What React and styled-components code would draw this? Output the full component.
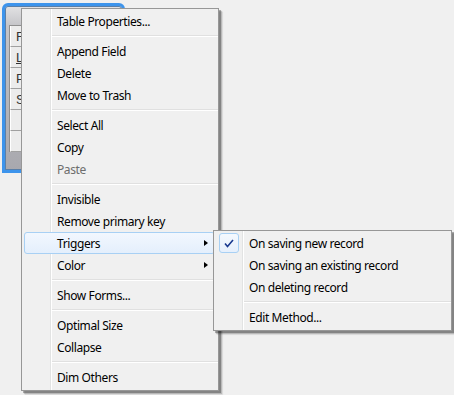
import React from 'react';
import styled, { createGlobalStyle } from 'styled-components';

const GlobalStyle = createGlobalStyle`
    html, body {
        margin: 0;
        padding: 0;
        background: #f0f0f0;
    }
    body {
        font-family: 'Noto Sans', 'Segoe UI', sans-serif;
        font-size: 12px;
        color: #000;
    }
`;

const Desktop = styled.div`
    position: relative;
    width: 454px;
    height: 395px;
    overflow: hidden;
    background: #f0f0f0;
`;

const Window = styled.div`
    position: absolute;
    left: 2px;
    top: 3px;
    width: 123px;
    height: 170px;
    box-sizing: border-box;
    border: 3px solid #3d94ec;
    border-radius: 6px 6px 0 0;
    background: linear-gradient(#e2e2e4 0px, #c4c4c8 20px, #a8a8ae 100%);
    padding: 19px 0 0 4px;
    box-shadow: inset 0 0 0 1px #5a7fa8;
`;

const Table = styled.div`
    display: grid;
    grid-template-rows: repeat(6, 21px);
    border-left: 1px solid #8f8f8f;
    border-top: 1px solid #8f8f8f;
    background: #ececec;
`;

const Cell = styled.div`
    display: flex;
    align-items: center;
    padding-left: 5px;
    border-bottom: 1px solid #a0a0a0;
    border-left: 1px solid #fff;
    font-family: 'Liberation Sans', sans-serif;
    font-size: 13px;
    color: #333;
    text-decoration: ${({ underline }) => (underline ? 'underline' : 'none')};
`;

const Menu = styled.div`
    position: absolute;
    left: ${({ left }) => left}px;
    top: ${({ top }) => top}px;
    width: ${({ width }) => width}px;
    box-sizing: border-box;
    display: flex;
    flex-direction: column;
    padding: 1px 0 2px 2px;
    border: 1px solid #979797;
    background:
        linear-gradient(to right, transparent 28px, #e2e3e3 28px, #e2e3e3 29px, #fff 29px, #fff 30px, transparent 30px),
        #f0f0f0;
    box-shadow: 2px 2px 0 rgba(0, 0, 0, 0.28), 3px 3px 1px rgba(0, 0, 0, 0.18), 4px 4px 1px rgba(0, 0, 0, 0.06);
`;

const Item = styled.div`
    position: relative;
    height: 22px;
    margin-right: 3px;
    box-sizing: border-box;
    display: flex;
    align-items: center;
    padding-left: 32px;
    border: 1px solid ${({ active }) => (active ? '#a8d0f4' : 'transparent')};
    border-radius: 3px;
    background: ${({ active }) =>
        active ? 'linear-gradient(#f2f7fe, #e4effc)' : 'transparent'};
    color: ${({ disabled }) => (disabled ? '#6d6d6d' : '#000')};
    letter-spacing: -0.4px;
    white-space: nowrap;
`;

const Separator = styled.div`
    height: 8px;
    margin-left: 28px;
    display: flex;
    flex-direction: column;
    justify-content: center;

    &::before {
        content: '';
        height: 1px;
        background: #e0e0e0;
    }
    &::after {
        content: '';
        height: 1px;
        background: #fff;
    }
`;

const Arrow = styled.span`
    position: absolute;
    right: 6px;
    top: 7px;
    width: 0;
    height: 0;
    border-top: 3.5px solid transparent;
    border-bottom: 3.5px solid transparent;
    border-left: 4px solid #000;
`;

const CheckBox = styled.span`
    position: absolute;
    left: 2px;
    top: 0;
    width: 20px;
    height: 20px;
    box-sizing: border-box;
    border: 1px solid #a8d0f4;
    border-radius: 3px;
    background: linear-gradient(#f4f9fe, #e6f0fc);
    display: flex;
    align-items: center;
    justify-content: center;
`;

const Check = () => (
    <svg width="10" height="9" viewBox="0 0 10 9">
        <path d="M1 4.5 L3.5 7.5 L9 1" fill="none" stroke="#1a3a8f" strokeWidth="1.6" />
    </svg>
);

const mainItems = [
    'Table Properties...',
    '-',
    'Append Field',
    'Delete',
    'Move to Trash',
    '-',
    'Select All',
    'Copy',
    { label: 'Paste', disabled: true },
    '-',
    'Invisible',
    'Remove primary key',
    { label: 'Triggers', sub: true, active: true },
    { label: 'Color', sub: true },
    '-',
    'Show Forms...',
    '-',
    'Optimal Size',
    'Collapse',
    '-',
    'Dim Others',
];

const subItems = [
    { label: 'On saving new record', checked: true },
    'On saving an existing record',
    'On deleting record',
    '-',
    'Edit Method...',
];

const renderItems = items =>
    items.map((it, i) => {
        if (it === '-') return <Separator key={i} />;
        const item = typeof it === 'string' ? { label: it } : it;
        return (
            <Item key={i} active={item.active} disabled={item.disabled}>
                {item.checked && (
                    <CheckBox>
                        <Check />
                    </CheckBox>
                )}
                {item.label}
                {item.sub && <Arrow />}
            </Item>
        );
    });

const App = () => (
    <Desktop>
        <GlobalStyle />
        <Window>
            <Table>
                <Cell>F</Cell>
                <Cell underline>L</Cell>
                <Cell>P</Cell>
                <Cell>S</Cell>
                <Cell />
                <Cell />
            </Table>
        </Window>
        <Menu left={21} top={8} width={198}>
            {renderItems(mainItems)}
        </Menu>
        <Menu left={213} top={230} width={239}>
            {renderItems(subItems)}
        </Menu>
    </Desktop>
);

export default App;
